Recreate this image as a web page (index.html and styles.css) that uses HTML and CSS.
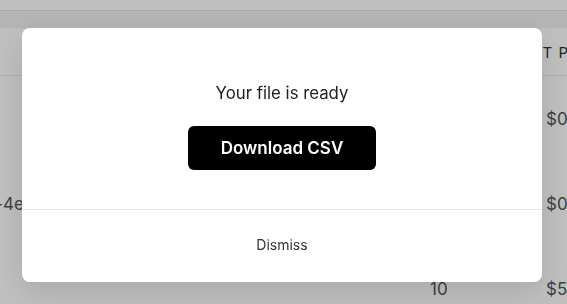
FILE: index.html
```html
<!DOCTYPE html>
<html lang="en">
<head>
    <meta charset="UTF-8">
    <link rel="stylesheet" href="styles.css">
</head>
<body>

    <div class="topbar"></div>
    <div class="subbar"></div>

    <div class="table">
        <div class="row head">
            <div class="cell first"></div>
            <div class="cell"></div>
            <div class="cell qty"></div>
            <div class="cell price hp">UNIT PRICE</div>
        </div>
        <div class="row">
            <div class="cell first"></div>
            <div class="cell"></div>
            <div class="cell qty"></div>
            <div class="cell price">$0.25</div>
        </div>
        <div class="row">
            <div class="cell first"><span>a91f-4e</span></div>
            <div class="cell"></div>
            <div class="cell qty"></div>
            <div class="cell price">$0.40</div>
        </div>
        <div class="row">
            <div class="cell first"></div>
            <div class="cell"></div>
            <div class="cell qty">10</div>
            <div class="cell price">$5.00</div>
        </div>
    </div>

    <div class="overlay">
        <div class="modal">
            <div class="modal-body">
                <p class="msg">Your file is ready</p>
                <button class="btn-dl">Download CSV</button>
            </div>
            <div class="modal-foot">
                <button class="btn-dismiss">Dismiss</button>
            </div>
        </div>
    </div>

</body>
</html>
```

FILE: styles.css
```css
body {
    margin: 0;
    font-family: Inter, "Noto Sans", sans-serif;
    background: #fff;
    overflow: hidden;
    height: 304px;
}

.topbar {
    height: 10px;
    background: #fff;
    border-bottom: 1px solid #e2e2e2;
}
.subbar {
    height: 17px;
    background: #f1f1f1;
}

.table {
    color: #555;
    height: 276px;
    overflow: hidden;
}
.row {
    display: grid;
    grid-template-columns: 22px 380px 144px 120px;
    height: 85px;
    align-items: center;
}
.row.head {
    height: 47px;
    border-bottom: 1px solid #e9e9e9;
}
.cell {
    font-size: 17px;
    white-space: nowrap;
    overflow: hidden;
}
.cell.first {
    display: flex;
    justify-content: flex-end;
}
.cell.first span { margin-right: -2px; }
.qty { padding-left: 28px; }
.hp {
    font-size: 15px;
    color: #333;
    letter-spacing: 1px;
    margin-left: -33px;
    margin-top: 2px;
}

.overlay {
    position: fixed;
    inset: 0;
    background: rgba(0, 0, 0, 0.25);
    display: flex;
    justify-content: center;
    align-items: flex-start;
    padding: 28px 3px 0 0;
}

.modal {
    width: 520px;
    height: 254px;
    background: #fff;
    border-radius: 8px;
    box-shadow: 0 10px 30px rgba(0, 0, 0, 0.12);
    display: flex;
    flex-direction: column;
}
.modal-body {
    height: 181px;
    border-bottom: 1px solid #e8e8e8;
    display: flex;
    flex-direction: column;
    align-items: center;
}
.msg {
    margin: 54px 0 0;
    font-size: 16.8px;
    color: #1e1e1e;
    line-height: 22px;
}
.btn-dl {
    margin-top: 22px;
    width: 188px;
    height: 44px;
    border: 0;
    border-radius: 6px;
    background: #000;
    color: #fff;
    font-family: Inter, "Noto Sans", sans-serif;
    font-weight: 600;
    font-size: 17px;
}
.modal-foot {
    flex: 1;
    display: flex;
    justify-content: center;
    align-items: center;
}
.btn-dismiss {
    border: 0;
    background: none;
    font-family: Inter, "Noto Sans", sans-serif;
    font-size: 14px;
    color: #333;
    margin-top: -4px;
}
```
